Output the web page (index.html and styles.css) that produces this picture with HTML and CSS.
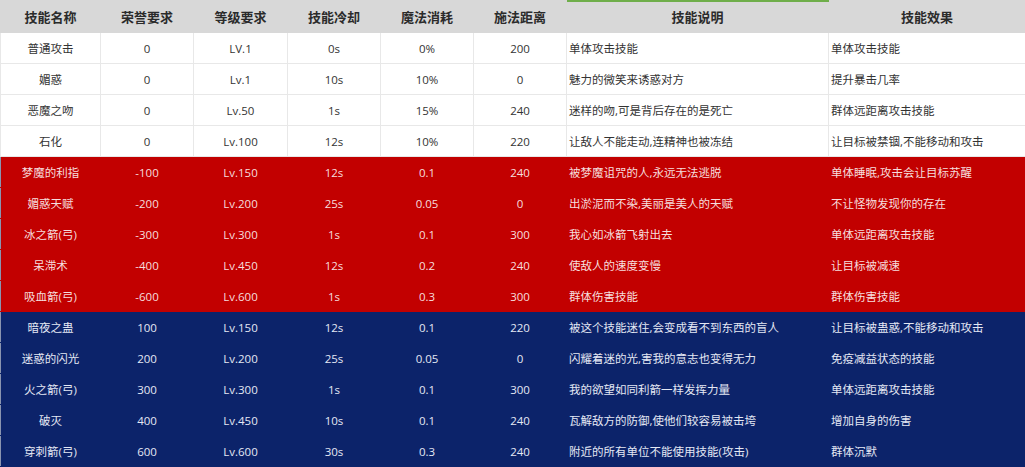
FILE: index.html
```html
<!DOCTYPE html>
<html lang="zh-CN">
<head>
<meta charset="utf-8">
<title>技能表</title>
<link rel="stylesheet" href="styles.css">
</head>
<body>
<div class="wrap">
<div class="accent"></div>
<table class="skills">
<colgroup>
<col class="c1"><col class="c2"><col class="c3"><col class="c4"><col class="c5"><col class="c6"><col class="c7"><col class="c8">
</colgroup>
<thead>
<tr><th>技能名称</th><th>荣誉要求</th><th>等级要求</th><th>技能冷却</th><th>魔法消耗</th><th>施法距离</th><th>技能说明</th><th>技能效果</th></tr>
</thead>
<tbody>
<tr class="w"><td>普通攻击</td><td>0</td><td>LV.1</td><td>0s</td><td>0%</td><td>200</td><td class="l">单体攻击技能</td><td class="l">单体攻击技能</td></tr>
<tr class="w"><td>媚惑</td><td>0</td><td>Lv.1</td><td>10s</td><td>10%</td><td>0</td><td class="l">魅力的微笑来诱惑对方</td><td class="l">提升暴击几率</td></tr>
<tr class="w"><td>恶魔之吻</td><td>0</td><td>Lv.50</td><td>1s</td><td>15%</td><td>240</td><td class="l">迷样的吻,可是背后存在的是死亡</td><td class="l">群体远距离攻击技能</td></tr>
<tr class="w"><td>石化</td><td>0</td><td>Lv.100</td><td>12s</td><td>10%</td><td>220</td><td class="l">让敌人不能走动,连精神也被冻结</td><td class="l">让目标被禁锢,不能移动和攻击</td></tr>
<tr class="r"><td>梦魔的利指</td><td>-100</td><td>Lv.150</td><td>12s</td><td>0.1</td><td>240</td><td class="l">被梦魔诅咒的人,永远无法逃脱</td><td class="l">单体睡眠,攻击会让目标苏醒</td></tr>
<tr class="r"><td>媚惑天赋</td><td>-200</td><td>Lv.200</td><td>25s</td><td>0.05</td><td>0</td><td class="l">出淤泥而不染,美丽是美人的天赋</td><td class="l">不让怪物发现你的存在</td></tr>
<tr class="r"><td>冰之箭(弓)</td><td>-300</td><td>Lv.300</td><td>1s</td><td>0.1</td><td>300</td><td class="l">我心如冰箭飞射出去</td><td class="l">单体远距离攻击技能</td></tr>
<tr class="r"><td>呆滞术</td><td>-400</td><td>Lv.450</td><td>12s</td><td>0.2</td><td>240</td><td class="l">使敌人的速度变慢</td><td class="l">让目标被减速</td></tr>
<tr class="r"><td>吸血箭(弓)</td><td>-600</td><td>Lv.600</td><td>1s</td><td>0.3</td><td>300</td><td class="l">群体伤害技能</td><td class="l">群体伤害技能</td></tr>
<tr class="b"><td>暗夜之蛊</td><td>100</td><td>Lv.150</td><td>12s</td><td>0.1</td><td>220</td><td class="l">被这个技能迷住,会变成看不到东西的盲人</td><td class="l">让目标被蛊惑,不能移动和攻击</td></tr>
<tr class="b"><td>迷惑的闪光</td><td>200</td><td>Lv.200</td><td>25s</td><td>0.05</td><td>0</td><td class="l">闪耀着迷的光,害我的意志也变得无力</td><td class="l">免疫减益状态的技能</td></tr>
<tr class="b"><td>火之箭(弓)</td><td>300</td><td>Lv.300</td><td>1s</td><td>0.1</td><td>300</td><td class="l">我的欲望如同利箭一样发挥力量</td><td class="l">单体远距离攻击技能</td></tr>
<tr class="b"><td>破灭</td><td>400</td><td>Lv.450</td><td>10s</td><td>0.1</td><td>240</td><td class="l">瓦解敌方的防御,使他们较容易被击垮</td><td class="l">增加自身的伤害</td></tr>
<tr class="b"><td>穿刺箭(弓)</td><td>600</td><td>Lv.600</td><td>30s</td><td>0.3</td><td>240</td><td class="l">附近的所有单位不能使用技能(攻击)</td><td class="l">群体沉默</td></tr>
</tbody>
</table>
</div>
</body>
</html>
```

FILE: styles.css
```css
html, body {
  margin: 0;
  padding: 0;
  background: #ffffff;
}
.wrap {
  position: relative;
  width: 1025px;
}
.accent {
  position: absolute;
  left: 567px;
  top: 0;
  width: 262px;
  height: 2px;
  background: #6fae4a;
}
.skills {
  width: 1025px;
  border-collapse: collapse;
  table-layout: fixed;
  font-family: "Open Sans", "Noto Sans CJK SC", sans-serif;
  font-size: 11.5px;
  line-height: 15px;
}
.c1 { width: 100px; }
.c2 { width: 93px; }
.c3 { width: 94px; }
.c4 { width: 93px; }
.c5 { width: 93px; }
.c6 { width: 93px; }
.c7 { width: 262px; }
.c8 { width: 197px; }
.skills th {
  height: 31px;
  padding: 0;
  background: #d8d8d8;
  color: #2b2b2b;
  font-family: "Noto Sans CJK SC", sans-serif;
  font-size: 13px;
  line-height: 16px;
  font-weight: 700;
  text-align: center;
  border: 1px solid #d8d8d8;
}
.skills td {
  height: 30px;
  padding: 0;
  text-align: center;
  vertical-align: middle;
  white-space: nowrap;
}
.skills td.l {
  text-align: left;
  padding-left: 2px;
}
.w td {
  background: #ffffff;
  color: #333333;
  border: 1px solid #e8e8e8;
}
.r td {
  background: #c20000;
  color: #f6dede;
  border: 1px solid #c20000;
}
.b td {
  background: #0c236a;
  color: #e4e8f4;
  border: 1px solid #0c236a;
}
.b td:first-child, .r td:first-child {
  border-left: 1px solid #8a94b0;
}
```
